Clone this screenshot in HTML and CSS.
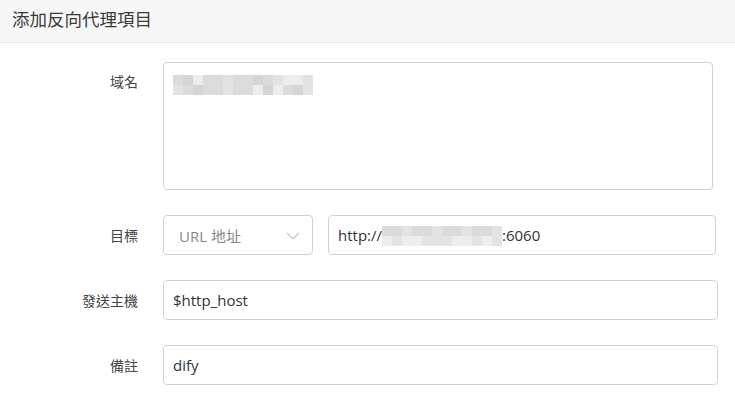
FILE: index.html
```html
<!DOCTYPE html>
<html lang="zh-Hant">
<head>
<meta charset="utf-8">
<link rel="stylesheet" href="styles.css">
</head>
<body>
<div class="header">添加反向代理項目</div>
<form class="form">
  <div class="row row-tall">
    <label class="label">域名</label>
    <div class="field textarea">
      <div class="mosaic mosaic-wide">
        <span class="s2"></span><span class="s1"></span><span class="s4"></span><span class="s2"></span><span class="s2"></span><span class="s3"></span><span class="s2"></span><span class="s2"></span><span class="s1"></span><span class="s2"></span><span class="s3"></span><span class="s4"></span><span class="s4"></span><span class="s3"></span>
        <span class="s3"></span><span class="s2"></span><span class="s1"></span><span class="s2"></span><span class="s2"></span><span class="s3"></span><span class="s2"></span><span class="s2"></span><span class="s4"></span><span class="s1"></span><span class="s4"></span><span class="s2"></span><span class="s1"></span><span class="s3"></span>
      </div>
    </div>
  </div>
  <div class="row">
    <label class="label">目標</label>
    <div class="field-group">
      <div class="field select">
        <span class="placeholder">URL 地址</span>
        <svg class="chevron" width="14" height="8" viewBox="0 0 14 8"><path d="M1 1 L7 7 L13 1" fill="none" stroke="#c4c4c4" stroke-width="1.1"/></svg>
      </div>
      <div class="field input input-target">
        <span>http://</span>
        <div class="mosaic mosaic-narrow">
          <span class="s2"></span><span class="s2"></span><span class="s3"></span><span class="s2"></span><span class="s2"></span><span class="s3"></span><span class="s2"></span><span class="s2"></span><span class="s3"></span><span class="s2"></span><span class="s2"></span><span class="s3"></span>
          <span class="s4"></span><span class="s3"></span><span class="s4"></span><span class="s4"></span><span class="s3"></span><span class="s3"></span><span class="s3"></span><span class="s4"></span><span class="s4"></span><span class="s3"></span><span class="s4"></span><span class="s3"></span>
        </div>
        <span>:6060</span>
      </div>
    </div>
  </div>
  <div class="row">
    <label class="label">發送主機</label>
    <div class="field input input-full">$http_host</div>
  </div>
  <div class="row">
    <label class="label">備註</label>
    <div class="field input input-full">dify</div>
  </div>
</form>
</body>
</html>
```
FILE: styles.css
```css
* { box-sizing: border-box; }
body {
  margin: 0;
  background: #fff;
  font-family: "Open Sans", "Noto Sans CJK TC", sans-serif;
  color: #333;
  font-size: 15px;
}
.header {
  height: 43px;
  background: #f7f7f7;
  border-bottom: 1px solid #e8e8e8;
  padding-left: 12px;
  font-family: "Noto Sans CJK TC", sans-serif;
  font-size: 17.5px;
  line-height: 38px;
  color: #3a3a3a;
}
.form {
  padding-top: 19px;
  display: flex;
  flex-direction: column;
  gap: 25px;
}
.row {
  display: flex;
  align-items: flex-start;
}
.label {
  width: 138px;
  text-align: right;
  margin-right: 25px;
  font-family: "Noto Sans CJK TC", sans-serif;
  font-size: 14px;
  line-height: 40px;
  color: #444;
  flex: none;
}
.row-tall .label { line-height: 38px; }
.field {
  border: 1px solid #d2d2d2;
  border-radius: 4px;
  background: #fff;
}
.textarea {
  width: 550px;
  height: 128px;
  padding: 12px 9px;
}
.field-group {
  display: flex;
  gap: 15px;
}
.select {
  width: 150px;
  height: 40px;
  display: flex;
  align-items: center;
  justify-content: space-between;
  padding: 0 12px 0 15px;
}
.placeholder {
  color: #888;
  font-size: 15px;
}
.chevron { display: block; margin-top: 1px; }
.input {
  height: 40px;
  display: flex;
  align-items: center;
  padding: 0 9px;
  font-size: 15px;
  color: #333;
}
.input-target { width: 388px; }
.input-full { width: 555px; }
.mosaic {
  display: grid;
  grid-auto-rows: 10px;
}
.mosaic-wide {
  grid-template-columns: repeat(14, 10px);
}
.mosaic-narrow {
  grid-template-columns: repeat(12, 10px);
  margin-top: 2px;
}
.s1 { background: #d5d5d5; }
.s2 { background: #dbdbdb; }
.s3 { background: #e3e3e3; }
.s4 { background: #ededed; }
```
